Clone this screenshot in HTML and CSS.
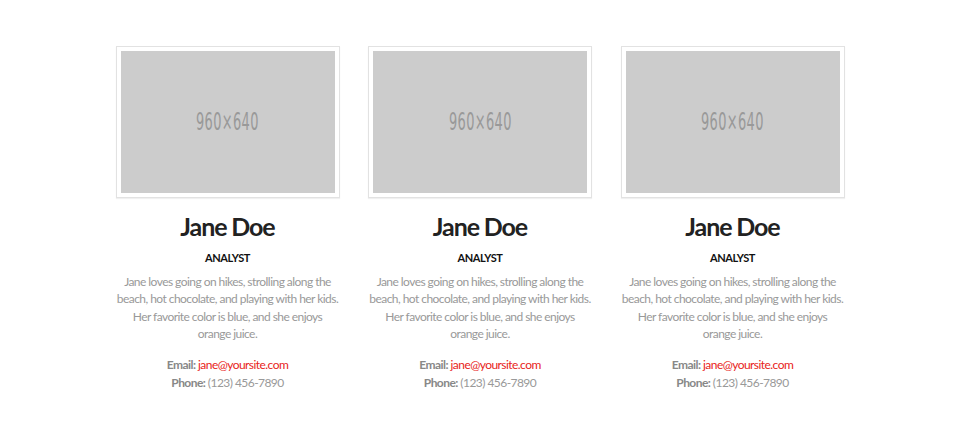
FILE: index.html
```html
<!DOCTYPE html>
<html lang="en">
<head>
<meta charset="utf-8">
<title>Team</title>
<link rel="stylesheet" href="styles.css">
</head>
<body>
<main class="team">
  <article class="member">
    <div class="frame"><div class="ph"><span class="ph-text">960×640</span></div></div>
    <h2 class="name">Jane Doe</h2>
    <h3 class="role">ANALYST</h3>
    <p class="bio">Jane loves going on hikes, strolling along the beach, hot chocolate, and playing with her kids. Her favorite color is blue, and she enjoys orange juice.</p>
    <p class="contact"><b>Email:</b> <a href="#">jane@yoursite.com</a><br><b>Phone:</b> (123) 456-7890</p>
  </article>
  <article class="member">
    <div class="frame"><div class="ph"><span class="ph-text">960×640</span></div></div>
    <h2 class="name">Jane Doe</h2>
    <h3 class="role">ANALYST</h3>
    <p class="bio">Jane loves going on hikes, strolling along the beach, hot chocolate, and playing with her kids. Her favorite color is blue, and she enjoys orange juice.</p>
    <p class="contact"><b>Email:</b> <a href="#">jane@yoursite.com</a><br><b>Phone:</b> (123) 456-7890</p>
  </article>
  <article class="member">
    <div class="frame"><div class="ph"><span class="ph-text">960×640</span></div></div>
    <h2 class="name">Jane Doe</h2>
    <h3 class="role">ANALYST</h3>
    <p class="bio">Jane loves going on hikes, strolling along the beach, hot chocolate, and playing with her kids. Her favorite color is blue, and she enjoys orange juice.</p>
    <p class="contact"><b>Email:</b> <a href="#">jane@yoursite.com</a><br><b>Phone:</b> (123) 456-7890</p>
  </article>
</main>
</body>
</html>
```

FILE: styles.css
```css
* { box-sizing: border-box; }
html, body { margin: 0; padding: 0; background: #fff; }
body {
  font-family: Lato, "Open Sans", sans-serif;
  color: #888;
  width: 960px;
  height: 430px;
  overflow: hidden;
}
.team {
  display: grid;
  grid-template-columns: repeat(3, 224px);
  column-gap: 28.5px;
  justify-content: center;
  padding-top: 46px;
}
.member {
  display: flex;
  flex-direction: column;
  align-items: center;
  text-align: center;
}
.frame {
  width: 224px;
  padding: 4px;
  border: 1px solid #e2e2e2;
  background: #fff;
  box-shadow: 0 1px 1px rgba(0,0,0,0.06);
}
.ph {
  height: 142px;
  background: #cccccc;
  display: flex;
  align-items: center;
  justify-content: center;
}
.ph-text {
  display: inline-block;
  font-family: "DejaVu Sans", sans-serif;
  font-stretch: condensed;
  font-size: 24px;
  color: #999;
  transform: scaleX(0.6);
  letter-spacing: 0.6px;
}
.name {
  margin: 13px 0 0;
  font-size: 25px;
  line-height: 30px;
  font-weight: 700;
  color: #222;
  letter-spacing: -1.1px;
}
.role {
  margin: 10px 0 0;
  font-size: 11px;
  line-height: 14px;
  font-weight: 700;
  color: #111;
  letter-spacing: -0.4px;
}
.bio {
  margin: 8px 0 0;
  font-size: 12px;
  line-height: 17.4px;
  color: #999;
  letter-spacing: -0.55px;
}
.contact {
  margin: 13px 0 0;
  font-size: 12px;
  line-height: 18px;
  color: #999;
  letter-spacing: -0.55px;
}
.contact b { color: #888; font-weight: 700; }
.contact a { color: #e8231a; text-decoration: none; }
```
